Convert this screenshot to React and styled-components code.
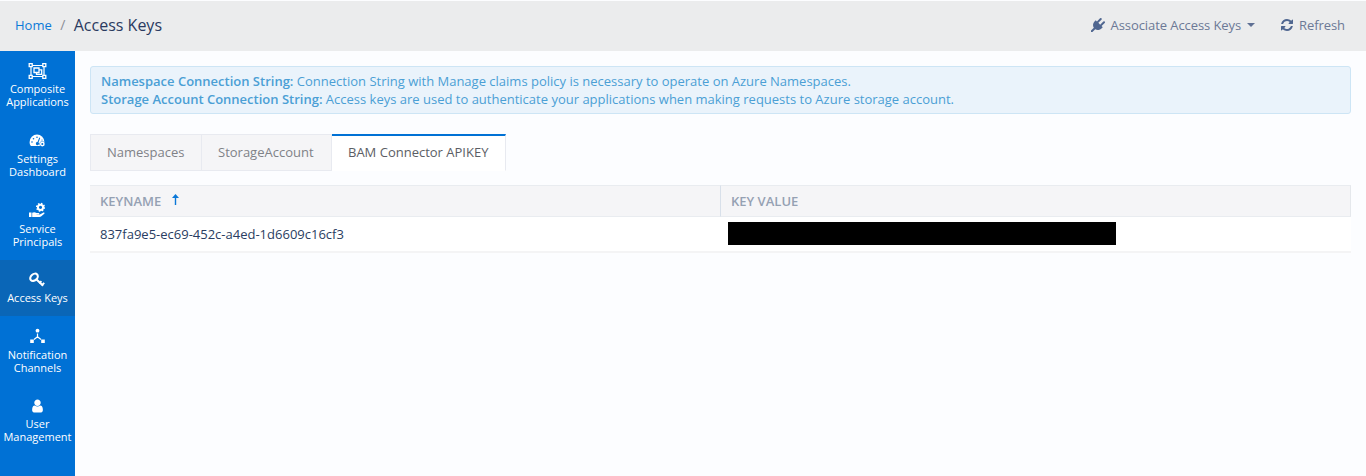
import React from "react";
import styled, { createGlobalStyle } from "styled-components";

const Global = createGlobalStyle`
  *, *::before, *::after { box-sizing: border-box; }
  html, body { margin: 0; }
  body {
    background: #fcfdff;
    font-family: "Open Sans", "Noto Sans", sans-serif;
    font-size: 13px;
    line-height: 18px;
    color: #1b2d52;
    overflow: hidden;
  }
  svg { display: block; }
`;

const Page = styled.div`
  display: flex;
  flex-direction: column;
  height: 100vh;
`;

const Header = styled.header`
  flex: none;
  display: flex;
  align-items: center;
  justify-content: space-between;
  height: 51px;
  padding: 0 21px 2px 15px;
  background: #ebeced;
  border-top: 1px solid #fcfdff;
`;

const Breadcrumb = styled.nav`
  display: flex;
  align-items: center;
`;

const HomeLink = styled.a`
  color: #0b7ad8;
`;

const Slash = styled.span`
  width: 22px;
  text-align: center;
  font-size: 14px;
  color: #8b8f98;
`;

const Title = styled.span`
  font-size: 16px;
  line-height: 22px;
  color: #2a3a60;
`;

const Actions = styled.div`
  display: flex;
  gap: 26px;
`;

const Action = styled.button`
  display: flex;
  align-items: center;
  gap: 6px;
  padding: 0;
  border: 0;
  background: none;
  font: inherit;
  letter-spacing: -0.08px;
  color: #6c7996;
  svg { color: #4f6690; }
`;

const Caret = styled.span`
  border: 4px solid transparent;
  border-top-color: #5f7094;
  border-bottom: 0;
`;

const Body = styled.div`
  flex: 1;
  display: flex;
  min-height: 0;
`;

const Sidebar = styled.aside`
  flex: none;
  width: 75px;
  background: #0071d5;
`;

const NavItem = styled.a`
  display: flex;
  flex-direction: column;
  align-items: center;
  height: ${(p) => p.$height}px;
  padding-top: ${(p) => p.$top}px;
  background: ${(p) => (p.$active ? "#0a66b7" : "transparent")};
  color: #fff;
  font-size: 11px;
  font-weight: 500;
  line-height: 13px;
  text-align: center;
  svg { height: 16px; margin-bottom: ${(p) => 31 - 16 - p.$top + p.$shift}px; }
`;

const NavLabel = styled.span`
  white-space: pre-line;
`;

const Main = styled.main`
  flex: 1;
  padding: 15px 15px 0;
`;

const Notice = styled.section`
  height: 48px;
  padding: 5px 10px;
  border: 1px solid #cde5f5;
  border-radius: 3px;
  background: #eaf3fb;
  color: #4b9fd5;
  p { margin: 0; white-space: nowrap; }
  strong { font-weight: 600; }
`;

const Tabs = styled.div`
  display: flex;
  margin: 20px 0 14px;
`;

const Tab = styled.button`
  width: ${(p) => p.$width}px;
  height: 37px;
  padding: 0 0 1px 16px;
  font: inherit;
  text-align: left;
  border: 1px solid #e8eaf0;
  border-left-width: ${(p) => (p.$first ? 1 : 0)}px;
  background: #f5f5f7;
  color: #808287;
  white-space: nowrap;
  ${(p) => p.$active && `
    background: #fff;
    color: #5b5e65;
    border-top: 2px solid #0071d5;
    border-bottom-color: #fff;
    padding-bottom: 2px;
  `}
`;

const Table = styled.div`
  display: grid;
  grid-template-columns: 631px 1fr;
`;

const HeadCell = styled.div`
  display: flex;
  align-items: center;
  gap: 11px;
  height: 32px;
  padding: 0 10px;
  border: solid #e9ecf0;
  border-width: 1px 1px 1px 0;
  border-right-color: ${(p) => (p.$last ? "#e5e8ec" : "#d8e0ea")};
  background: #f5f5f7;
  color: #95a1b3;
  font-weight: 600;
`;

const Cell = styled.div`
  display: flex;
  align-items: center;
  height: 36px;
  padding: 0 10px 1px;
  padding-left: ${(p) => (p.$value ? 7 : 10)}px;
  border-bottom: 2px solid #f4f4f5;
  background: #fff;
  color: #2a3d62;
`;

const Redacted = styled.span`
  width: 388px;
  height: 23px;
  background: #000;
`;

const GroupIcon = () => (
  <svg width="19" viewBox="0 0 18 16" fill="none" stroke="currentColor">
    <path d="M2.500 2.500h13v11h-13z" strokeWidth="1.200" />
    <path d="M.7.7h3v3h-3zM14.300.7h3v3h-3zM.7 12.300h3v3h-3zM14.300 12.300h3v3h-3z" fill="#0071d5" strokeWidth="1.300" />
    <path d="M5.500 5h5v4.500h-5zM11 6.800h2.200v4.600H8V9.500" strokeWidth="1.300" />
  </svg>
);

const GaugeIcon = () => (
  <svg width="17" viewBox="0 0 17 16">
    <path fill="currentColor" d="M2 14C.9 12.900.6 11.600.6 10a7.400 7.400 0 0 1 14.800 0v4z" />
    <g fill="#0071d5">
      <circle cx="3" cy="10" r=".8" /><circle cx="4.500" cy="6.700" r=".8" />
      <circle cx="8" cy="5.200" r=".8" /><circle cx="13" cy="8" r=".6" />
      <path d="M10.300 5.500l.9.4-1.700 4.500a1.600 1.600 0 1 1-1-.4z" />
      <circle cx="13.300" cy="12" r="2.800" />
    </g>
    <circle cx="13.300" cy="12" r="1.700" fill="none" stroke="currentColor" strokeWidth="1.400" />
  </svg>
);

const ServiceIcon = () => (
  <svg width="17" viewBox="0 0 17 16" fill="currentColor">
    <circle cx="11.500" cy="5.300" r="2.600" fill="none" stroke="currentColor" strokeWidth="2" />
    <circle cx="11.500" cy="5.300" r="3.800" fill="none" stroke="currentColor" strokeWidth="1.500" strokeDasharray="1.500 1.484" />
    <path d="M0 10.500h2.500v4.500H0zM3.200 10.800c1.500-1 3-.7 4.300.2h2.300c.8 0 .8 1.100 0 1.200H7.500v.4h3.300l3.300-1.900c1-.5 1.900.3 1.200 1.100L12 14.500c-.4.3-.8.5-1.300.5H3.200z" />
  </svg>
);

const KeyIcon = () => (
  <svg width="17" viewBox="0 0 17 16" fill="none" stroke="currentColor">
    <ellipse cx="5" cy="5.300" rx="4.200" ry="3.100" transform="rotate(-42 5 5.300)" strokeWidth="2.100" />
    <path d="M7.300 7.200l6.800 6.600" strokeWidth="2" />
    <path d="M10.300 11.400l2.100-2.200M12.700 13.400l2.500-2.600" strokeWidth="1.900" />
  </svg>
);

const NetworkIcon = () => (
  <svg width="15" viewBox="0.500 0 15 16" fill="currentColor">
    <circle cx="8" cy="2.700" r="1.900" />
    <path d="M.7 11.500h3.600V15H.7zM11.700 11.500h3.600V15h-3.600z" />
    <path d="M8 5.500v3.500M8 8.800l-3.500 2.700M8 8.800l3.500 2.700" fill="none" stroke="currentColor" strokeWidth="1.200" />
  </svg>
);

const UserIcon = () => (
  <svg width="15" viewBox="0 0 1792 1792" fill="currentColor">
    <path d="M1536 1399q0 109-62.500 187t-150.500 78h-854q-88 0-150.500-78t-62.500-187q0-85 8.500-160.500t31.500-152 58.500-131 94-89 134.500-34.500q131 128 313 128t313-128q76 0 134.500 34.500t94 89 58.500 131 31.500 152 8.500 160.500zm-256-887q0 159-112.500 271.500t-271.500 112.500-271.500-112.500-112.500-271.500 112.500-271.500 271.500-112.500 271.500 112.500 112.500 271.500z" />
  </svg>
);

const PlugIcon = () => (
  <svg width="14" height="14" viewBox="0 0 1792 1792" fill="currentColor">
    <path d="M1755 453q37 38 37 90.500t-37 90.500l-401 400 150 150-160 160q-163 163-389.500 186.500t-411.500-100.500l-362 362h-181v-181l362-362q-124-185-100.500-411.500t186.500-389.500l160-160 150 150 400-401q38-37 91-37t90 37 37 90.500-37 90.500l-400 401 234 234 401-400q38-37 91-37t90 37z" />
  </svg>
);

const RefreshIcon = () => (
  <svg width="12" height="12" viewBox="128 128 1536 1536" fill="currentColor">
    <path d="M1639 1056q0 5-1 7-64 268-268 434.500t-478 166.500q-146 0-282.500-55t-243.500-157l-129 129q-19 19-45 19t-45-19-19-45v-448q0-26 19-45t45-19h448q26 0 45 19t19 45-19 45l-137 137q71 66 161 102t187 36q134 0 250-65t186-179q11-17 53-117 8-23 30-23h192q13 0 22.500 9.500t9.500 22.500zm25-800v448q0 26-19 45t-45 19h-448q-26 0-45-19t-19-45 19-45l138-138q-148-137-349-137-134 0-250 65t-186 179q-11 17-53 117-8 23-30 23h-199q-13 0-22.500-9.500t-9.500-22.500v-7q65-268 270-434.500t480-166.500q146 0 284 55.500t245 156.500l130-129q19-19 45-19t45 19 19 45z" />
  </svg>
);

const SortIcon = () => (
  <svg width="7" height="12" viewBox="0 0 7 12" fill="#0b78d8">
    <path d="M3.500 0L7 4H4.200v7H2.800V4H0z" />
  </svg>
);

const SortMark = styled.span`
  padding-bottom: 3px;
`;

const NAV = [
  { label: "Composite\nApplications", Icon: GroupIcon, height: 69, top: 12, shift: 0 },
  { label: "Settings\nDashboard", Icon: GaugeIcon, height: 70, top: 12, shift: 1 },
  { label: "Service\nPrincipals", Icon: ServiceIcon, height: 70, top: 12, shift: 1 },
  { label: "Access Keys", Icon: KeyIcon, height: 56, top: 12, shift: 0, active: true },
  { label: "Notification\nChannels", Icon: NetworkIcon, height: 70, top: 12, shift: 1 },
  { label: "User\nManagement", Icon: UserIcon, height: 70, top: 12, shift: 0 },
];

export default function App() {
  return (
    <Page>
      <Global />
      <Header>
        <Breadcrumb>
          <HomeLink>Home</HomeLink>
          <Slash>/</Slash>
          <Title>Access Keys</Title>
        </Breadcrumb>
        <Actions>
          <Action><PlugIcon />Associate Access Keys<Caret /></Action>
          <Action><RefreshIcon />Refresh</Action>
        </Actions>
      </Header>
      <Body>
        <Sidebar>
          {NAV.map(({ label, Icon, height, top, shift, active }) => (
            <NavItem key={label} $height={height} $top={top} $shift={shift} $active={active}>
              <Icon />
              <NavLabel>{label}</NavLabel>
            </NavItem>
          ))}
        </Sidebar>
        <Main>
          <Notice>
            <p><strong>Namespace Connection String:</strong> Connection String with Manage claims policy is necessary to operate on Azure Namespaces.</p>
            <p><strong>Storage Account Connection String:</strong> Access keys are used to authenticate your applications when making requests to Azure storage account.</p>
          </Notice>
          <Tabs>
            <Tab $first $width={112}>Namespaces</Tab>
            <Tab $width={130}>StorageAccount</Tab>
            <Tab $width={174} $active>BAM Connector APIKEY</Tab>
          </Tabs>
          <Table>
            <HeadCell>KEYNAME<SortMark><SortIcon /></SortMark></HeadCell>
            <HeadCell $last>KEY VALUE</HeadCell>
            <Cell>837fa9e5-ec69-452c-a4ed-1d6609c16cf3</Cell>
            <Cell $value><Redacted /></Cell>
          </Table>
        </Main>
      </Body>
    </Page>
  );
}
